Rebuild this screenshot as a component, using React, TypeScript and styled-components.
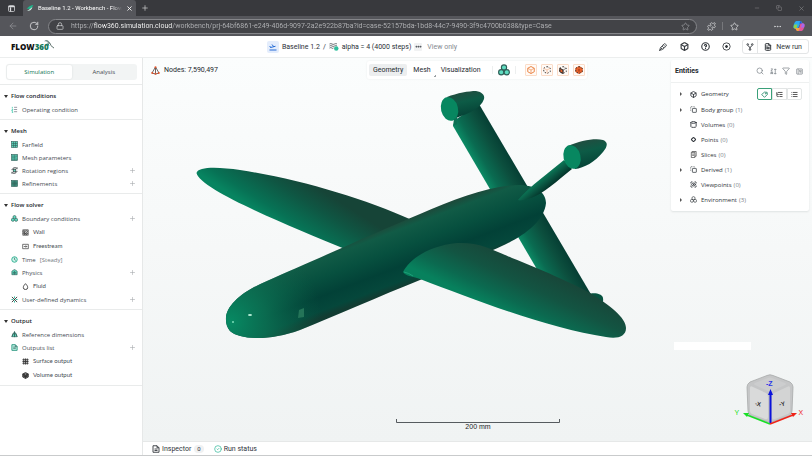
import React from "react";
import styled, { createGlobalStyle, css } from "styled-components";
import {
  ArrowLeft, RotateCw, Lock, Star, X, Plus, Minus, Copy, Ellipsis, Puzzle,
  Box as Cube, CircleQuestionMark, FileText, Search, Funnel,
  ListTree, List, Cylinder, Diamond, ScanEye, CircleCheck,
} from "lucide-react";

const GlobalStyle = createGlobalStyle`
  * { box-sizing: border-box; }
  body {
    margin: 0; background: #fff; font-family: Roboto, "Open Sans", sans-serif; font-size: 7px; line-height: 10px;
    color: #30353c;
  }
  button, input { font: inherit; color: inherit; border: 0; padding: 0; margin: 0; background: none; }
  ul { list-style: none; margin: 0; padding: 0; }
  h2, h3 { display: flex; margin: 0; font: inherit; }
  svg { display: block; flex: none; }
`;

const Page = styled.div`display: flex; flex-direction: column; min-height: 100vh; border-bottom: 1px solid #c9cbcc;`;

/* browser chrome */
const TabStrip = styled.div`display: flex; align-items: center; height: 16px; background: #38393d; color: #d4d5d7;`;
const TabMenu = styled.button`display: grid; place-items: center; width: 23px; height: 16px; color: #dadbdd;`;
const BrowserTab = styled.div`
  display: flex; align-items: center; gap: 4px; width: 113px; height: 16px; padding: 0 4px 0 3px;
  background: #55565b; border-radius: 3px 3px 0 0; color: #fff; font-size: 6px;
`;
const TabTitle = styled.span`
  flex: 1; overflow: hidden; white-space: nowrap;
  mask-image: linear-gradient(to right, #000 88%, transparent);
`;
const IconButton = styled.button<{ $w?: number }>`display: grid; place-items: center; width: ${(p) => p.$w ?? 12}px; height: 12px;`;
const WindowButtons = styled.div`display: flex; margin-left: auto; color: #88898c;`;
const AddressRow = styled.div`display: flex; align-items: center; height: 20px; background: #55565b; color: #d8d9db; padding-right: 7px;`;
const AddressBox = styled.label`
  display: flex; align-items: center; flex: 1; gap: 7px; height: 15px; margin-left: 6px; padding: 0 5px 0 7px;
  border: 1px solid #85868a; border-radius: 8px; background: #424347;
`;
const AddressInput = styled.input`
  flex: 1; min-width: 0; outline: 0; height: 11px; color: transparent;
  background: linear-gradient(to right, #b4b5b8 0 22px, #fff 22px 101px, #b4b5b8 101px);
  background-clip: text; -webkit-background-clip: text;
`;
const ChromeTools = styled.div`display: flex; align-items: center; gap: 5px; margin-left: 8px;`;
const ThinRule = styled.span`width: 1px; height: 8px; background: #77787c;`;
const Spacer = styled.span<{ $w: number }>`width: ${(p) => p.$w}px;`;

/* application header */
const Header = styled.header`
  display: grid; grid-template-columns: 8fr auto 11fr; align-items: center; height: 22px; padding: 0 3px 0 11px;
  border-bottom: 1px solid #eceeee; background: #fff;
`;
const Logo = styled.a`
  display: flex; justify-self: start; color: #111; text-decoration: none; font: 800 8px/12px "Open Sans", sans-serif;
  em { font-style: normal; color: #14795a; }
  svg { margin: -2px 0 0 -6px; }
`;
const Crumbs = styled.nav`display: flex; align-items: center; gap: 3px; white-space: nowrap;`;
const CrumbIcon = styled.span`display: grid; place-items: center; width: 12px; height: 12px; border-radius: 2px; background: #e4edfc; color: #246bd6;`;
const Crumb = styled.a`color: #2b3037; text-decoration: none;`;
const MoreButton = styled.button`display: grid; place-items: center; width: 8px; height: 8px; border-radius: 1px; background: #f1f2f3;`;
const ViewOnly = styled.span`margin-left: 2px; color: #858a91;`;
const HeaderTools = styled.div`display: flex; justify-self: end; align-items: center; gap: 9px; color: #33383d;`;
const RunGroup = styled.div`
  display: flex; height: 15px; margin-left: 1px; border: 1px solid #e3e5e6; border-radius: 3px;
`;
const RunButton = styled.button`
  display: flex; align-items: center; gap: 4px; padding: 0 6px; white-space: nowrap;
  &:first-child { padding: 0 3px; border-right: 1px solid #e3e5e6; }
`;

/* sidebar */
const Body = styled.div`display: flex; flex: 1;`;
const Sidebar = styled.aside`
  flex: none; width: 143px; padding-top: 6px; border-right: 1px solid #e6e8e8; background: #fff;
  font-family: "Open Sans", sans-serif; font-size: 6px;
`;
const Segmented = styled.div`display: flex; margin: 0 5px 4px 6px; height: 16px; padding: 1px; border-radius: 3px; background: #f2f4f4;`;
const Segment = styled.button<{ $active?: boolean }>`
  flex: 1; border-radius: 2px; color: #454b52;
  ${(p) => p.$active && css`background: #fff; color: #0c7452; box-shadow: 0 0 2px #d5d9d9;`}
`;
const Section = styled.section`padding: 4px 6px 3px 4px; border-top: 1px solid #e9ebeb; &:last-child { border-bottom: 1px solid #e9ebeb; }`;
const SectionTitle = styled.button`
  display: flex; align-items: center; gap: 3px; height: 14px; color: #23282e; font-weight: 600;
  &::before { content: ""; border: 2px solid transparent; border-top: 3px solid #333; border-bottom: 0; }
`;
const SideRow = styled.li<{ $nested?: boolean }>`
  display: flex; align-items: center; justify-content: space-between;
  height: ${(p) => (p.$nested ? 14 : 13)}px; padding-left: ${(p) => (p.$nested ? 18 : 7)}px;
  color: #454b52;
  ${(p) => p.$nested && css`font-family: Lato, sans-serif;`}
`;
const SideLink = styled.button`display: flex; align-items: center; gap: 4px; white-space: nowrap;`;
const Note = styled.span`color: #757b82;`;
const AddButton = styled.button`color: #a5a9ad;`;

/* viewport */
const Main = styled.main`display: flex; flex-direction: column; flex: 1; min-width: 0;`;
const Viewport = styled.div`
  position: relative; display: flex; flex: 1; min-height: 383px; overflow: hidden;
  background: linear-gradient(#fbfdfd, #f6f8f8 50%, #f0f3f3);
`;
const Scene = styled.svg`width: 100%; flex: 1;`;
const NodeCount = styled.div`position: absolute; top: 7px; left: 8px; display: flex; align-items: center; gap: 4px; color: #24292e;`;
const ViewBar = styled.div`
  position: absolute; top: 3px; left: 224px; display: flex; align-items: center; height: 18px; padding: 0 2px;
  background: #fff; border-radius: 2px; box-shadow: 0 0 2px #e9ecec;
`;
const ViewTab = styled.button<{ $active?: boolean }>`
  position: relative; height: 12px; padding: 0 4px; border-radius: 2px; color: #262b31; margin-right: 2px;
  background: ${(p) => (p.$active ? "#eceeef" : "transparent")};
`;
const Corner = styled.span`position: absolute; right: -1px; bottom: -1px; width: 2px; height: 2px; border: solid #9a9fa3; border-width: 0 1px 1px 0;`;
const BarRule = styled.span`width: 1px; height: 8px; margin: 0 5px; background: #edefef;`;
const ModeButtons = styled.div`display: flex; gap: 4px; margin-left: 4px;`;
const ModeButton = styled.button`display: grid; place-items: center; width: 12px; height: 12px; border: 1px solid #fbdcc8; border-radius: 1px; background: #fffaf6;`;
const BlankField = styled.div`position: absolute; right: 61px; bottom: 91px; width: 77px; height: 8px; background: #fff;`;
const CubeWidget = styled.div`position: absolute; right: 4px; bottom: 14px;`;

/* entities panel */
const Panel = styled.aside`
  position: absolute; top: 2px; right: 3px; width: 138px; padding-bottom: 4px; background: #fff;
  border-radius: 2px; box-shadow: 0 1px 2px #dfe3e3; font-family: "Open Sans", sans-serif; font-size: 6px;
`;
const PanelHead = styled.div`display: flex; align-items: center; height: 23px; padding: 0 6px 0 4px; border-bottom: 1px solid #eef0f0; margin-bottom: 3px;`;
const PanelTitle = styled.h2`flex: 1; font-weight: 700; font-family: Roboto, sans-serif; font-size: 7px; color: #24292e;`;
const PanelTools = styled.div`display: flex; gap: 5px; color: #737a80;`;
const EntityRow = styled.li<{ $first?: boolean }>`display: flex; align-items: center; height: ${(p) => (p.$first ? 16 : 15)}px; padding: 0 7px 0 9px;`;
const Caret = styled.span<{ $shown: boolean }>`
  width: 3px; border: 2px solid transparent; border-left: 2px solid #555; border-right: 0; margin-right: 7px;
  visibility: ${(p) => (p.$shown ? "visible" : "hidden")};
`;
const EntityButton = styled.button`
  display: flex; flex: 1; align-items: center; gap: 4px; color: #2f343a; white-space: nowrap;
  span { color: #7a8087; margin-left: -2px; }
`;
const Toggle = styled.div`display: flex; height: 12px;`;
const ToggleButton = styled.button<{ $active?: boolean }>`
  display: grid; place-items: center; width: 15px; border: 1px solid ${(p) => (p.$active ? "#3aa079" : "#e2e5e5")};
  color: ${(p) => (p.$active ? "#18815f" : "#444")};
  &:first-child { border-radius: 2px 0 0 2px; }
  &:last-child { border-radius: 0 2px 2px 0; }
`;
const StatusBar = styled.footer`display: flex; align-items: center; gap: 10px; height: 14px; padding-left: 9px; background: #fff; border-top: 1px solid #e6e8e8;`;
const StatusItem = styled.button`display: flex; align-items: center; gap: 2px;`;
const Count = styled.span`margin-left: 1px; padding: 0 3px; border-radius: 4px; background: #f0f1f2; font-size: 6px; line-height: 8px;`;

const TEAL = "#5fdcc0";
const INK = "#2f5f58";

type GlyphName =
  | "operating" | "farfield" | "meshparams" | "rotation" | "refine" | "boundary" | "wall" | "freestream"
  | "time" | "physics" | "fluid" | "dynamics" | "reference" | "outputs" | "surface" | "volume" | "environment"
  | "group" | "slices" | "pen" | "target" | "inspect" | "fork" | "sort" | "dock" | "tag" | "plane";

const glyphs: Record<GlyphName, React.ReactNode> = {
  operating: <><path d="M3 2v3M2 7h2v2H2v2h2M2 13h2v2H2" stroke="#49cdb0" strokeWidth="2" /><path d="M7 3h7M7 8h7M7 13h7" stroke="#667" /></>,
  farfield: <><rect x="1.5" y="1.5" width="13" height="13" fill={TEAL} /><path d="M1.5 6h13M1.5 10.5h13M6 1.5v13M10.5 1.5v13" /></>,
  meshparams: <><rect x="1.5" y="1.5" width="13" height="13" fill={TEAL} /><path d="M4.5 1.5v13M8 1.5v13M11.5 1.5v13M1.5 5h13M1.5 8.5h9M1.5 12h13" strokeWidth="1" /></>,
  rotation: <g stroke="#2b3135"><path d="M2 7C4 1 11 0 14 4V1M14 9C12 15 5 16 2 12v3" strokeWidth="2" /><rect x="5" y="5" width="6" height="6" fill={TEAL} /></g>,
  refine: <><rect x="1.5" y="1.5" width="13" height="13" fill="#47a995" /><path d="M1.5 5h13M1.5 8h13M1.5 11h13M5 1.5v13M8 1.5v13M11 1.5v13" strokeWidth="1.4" /></>,
  boundary: <g fill={TEAL}><circle cx="8" cy="4.7" r="3.5" /><circle cx="4.3" cy="11" r="3.5" /><circle cx="11.7" cy="11" r="3.5" /></g>,
  environment: <g stroke="#343a3f" fill="none"><circle cx="8" cy="5" r="3.6" /><circle cx="4.4" cy="11" r="3.4" /><circle cx="11.6" cy="11" r="3.4" /></g>,
  wall: <g stroke="#333"><rect x="2" y="2" width="12" height="12" fill="#ccc" /><path d="M2 6l4-4M2 11l9-9M4 14l10-10M9 14l5-5" /><path d="M5 5v6h6" strokeWidth="2" /></g>,
  freestream: <g stroke="#333"><path d="M1.5 3h13v10h-13zM4 8h7M8.5 5.5L11 8l-2.5 2.5" /></g>,
  time: <><circle cx="8" cy="8" r="6.3" fill="#c8f5e9" stroke="#28a98b" strokeWidth="2" /><path d="M8 4v4l3 2" /></>,
  physics: <><path d="M8 1l6 4v8H2V5z" fill={TEAL} /><path d="M8 4v9M5 7l3 2 3-2M5 12V7M11 12V7" /></>,
  fluid: <path d="M8 1.5C5 5 3 7 3 10a5 5 0 0010 0c0-3-2-5-5-8.5z" stroke="#333" strokeWidth="2" />,
  dynamics: <><path d="M2 2l12 12M14 2L2 14" stroke="#333" strokeWidth="2" /><path d="M1 8h4M11 8h4M8 1v4M8 11v4" stroke="#2fb99b" strokeWidth="2.2" /></>,
  reference: <><path d="M8 1l6 12H2z" fill={TEAL} /><path d="M8 2v12M2 13l3-8M14 13l-3-8" strokeWidth="2" /></>,
  outputs: <><path d="M2 1.5h8l4 4v9H2z" fill="#baf3e5" stroke="#26937b" strokeWidth="2" /><path d="M5 7h6M5 10h6M10 2v4h4" /></>,
  surface: <g stroke="#333" strokeWidth="2"><path d="M1 4h14M1 8h14M1 12h14M4 1v14M8 1v14M12 1v14" /></g>,
  volume: <g stroke="#222"><path d="M8 1l6.5 3.5v7L8 15l-6.5-3.5v-7z" fill="#777" /><path d="M1.5 4.5L8 8l6.5-3.5M8 8v7M5 3v9M11 3v9M2 8l6 3 6-3" /></g>,
  group: <g stroke="#3c4247"><path d="M10 3V1.5H1.5V10H3" strokeDasharray="2 1.5" /><rect x="5.5" y="5.5" width="9" height="9" rx="1" strokeWidth="1.8" /></g>,
  slices: <g stroke="#333"><path d="M3 3h8v12H3zM5 3V1h9v11h-3M5 7h4M5 10h4" /></g>,
  pen: <g stroke="#33383d" strokeWidth="1.6"><path d="M1 15l2-6 7.5-7.5h2L14.5 4v2L7 13z" /><path d="M3.5 8.5l4 4M6 6l4 4M8.5 3.5l4 4M1 15l5-5" /></g>,
  target: <g stroke="#33383d"><circle cx="8" cy="8" r="6.5" /><path d="M8 5.5v5M5.5 8h5" strokeWidth="2.4" /></g>,
  inspect: <g stroke="#33383d"><path d="M2 1.5h8l4 4v9H2zM10 1.5v4h4" strokeWidth="1.8" /><path d="M5 8h6M5 11h6" strokeWidth="1.8" /></g>,
  fork: <g stroke="#33383d" strokeWidth="1.8"><circle cx="3.5" cy="3" r="1.6" /><circle cx="12.5" cy="3" r="1.6" /><circle cx="8" cy="13" r="1.6" /><path d="M3.5 5l4.5 4 4.5-4M8 8v4" /></g>,
  sort: <g stroke="#6d747a"><path d="M2 2h4L2 7h4M2 14v-4h4v4M2 12h4M12 2v12M9.5 4.5L12 2l2.5 2.5M9.5 11.5L12 14l2.5-2.5" /></g>,
  dock: <g stroke="#7a8187"><rect x="1.5" y="2" width="13" height="12" rx="1" /><path d="M5 2v12M8 5h4v3H8zM8 11h5" /></g>,
  tag: <g stroke="#18815f" strokeWidth="1.8"><path d="M8 2.5l6 .5.5 5L8 14.5 1.5 8z" /><circle cx="11" cy="6" r="1" /></g>,
  plane: <g stroke="#246bd6" strokeWidth="2"><path d="M1 14h14M3 9l10-2.5M1.5 6l2 3.5M6 3l3.5 4.5" /></g>,
};

const Glyph = ({ name, size = 7 }: { name: GlyphName; size?: number }) => (
  <svg width={size} height={size} viewBox="0 0 16 16" fill="none" stroke={INK} strokeWidth="1.5" aria-hidden="true">{glyphs[name]}</svg>
);

type Item = { label: string; icon: GlyphName; nested?: boolean; add?: boolean; note?: string };
const sections: { title: string; items: Item[] }[] = [
  { title: "Flow conditions", items: [{ label: "Operating condition", icon: "operating" }] },
  { title: "Mesh", items: [
    { label: "Farfield", icon: "farfield" },
    { label: "Mesh parameters", icon: "meshparams" },
    { label: "Rotation regions", icon: "rotation", add: true },
    { label: "Refinements", icon: "refine", add: true },
  ] },
  { title: "Flow solver", items: [
    { label: "Boundary conditions", icon: "boundary", add: true },
    { label: "Wall", icon: "wall", nested: true },
    { label: "Freestream", icon: "freestream", nested: true },
    { label: "Time", icon: "time", note: "[Steady]" },
    { label: "Physics", icon: "physics", add: true },
    { label: "Fluid", icon: "fluid", nested: true },
    { label: "User-defined dynamics", icon: "dynamics", add: true },
  ] },
  { title: "Output", items: [
    { label: "Reference dimensions", icon: "reference" },
    { label: "Outputs list", icon: "outputs", add: true },
    { label: "Surface output", icon: "surface", nested: true },
    { label: "Volume output", icon: "volume", nested: true },
  ] },
];

const entities: { label: string; count?: number; open?: boolean; icon: React.ReactNode }[] = [
  { label: "Geometry", open: true, icon: <Cube size={7} strokeWidth={3} /> },
  { label: "Body group", count: 1, open: true, icon: <Glyph name="group" /> },
  { label: "Volumes", count: 0, icon: <Cylinder size={7} strokeWidth={3} /> },
  { label: "Points", count: 0, icon: <Diamond size={7} viewBox="-5 -5 34 34" strokeWidth={5} /> },
  { label: "Slices", count: 0, icon: <Glyph name="slices" /> },
  { label: "Derived", count: 1, open: true, icon: <Glyph name="group" /> },
  { label: "Viewpoints", count: 0, icon: <ScanEye size={7} strokeWidth={3} /> },
  { label: "Environment", count: 3, open: true, icon: <Glyph name="environment" /> },
];

const Swoosh = () => (
  <svg width="12" height="12" viewBox="0 0 24 24" aria-hidden="true">
    <path d="M2 5C6 0 12 2 14 9l-3 1C9 5 6 4 2 5z" fill="#78938c" />
    <path d="M7 9c4-1 5 2 6 5-3-1-4-3-6-5z" fill="#167257" />
    <path d="M13 7c2 4 4 9 9 11" stroke="#596d68" strokeWidth="2" fill="none" />
  </svg>
);

const Favicon = () => (
  <svg width="8" height="8" viewBox="0 0 16 16" aria-hidden="true">
    <path d="M1 9C5 8 5 3 15 2c-3 3-2 7-8 8z" fill="#21b48b" /><path d="M2 14c5 0 9-2 11-8-4 3-6 5-11 8z" fill="#d7f5eb" />
  </svg>
);

const Copilot = () => (
  <svg width="12" height="12" viewBox="0 0 24 24" aria-hidden="true">
    <path d="M8 2h7c3 0 3 5 5 6h-6L10 17H4c-5 0-3-7-1-11 1-3 3-4 5-4z" fill="#2ba8f0" />
    <path d="M3 9h6l-2 8H4c-4 0-3-5-1-8z" fill="#8cd34b" />
    <path d="M14 2c3 0 3 5 5 6h-6z" fill="#2457d6" />
    <path d="M16 22H9c-3 0-3-5-5-6h8l3-9h5c5 0 3 7 1 11-1 3-3 4-5 4z" fill="#e3559a" />
    <path d="M4 16h10l-3 6H9c-3 0-3-5-5-6z" fill="#f4a63a" />
    <path d="M18 7h2c4 0 3 5 2 8h-6z" fill="#a667ed" />
  </svg>
);

const ModeIcon = ({ mode }: { mode: number }) => (
  <svg width="8" height="8" viewBox="0 0 16 16" fill="none" stroke={mode === 0 ? "#e97b37" : "#33302f"} strokeWidth="1.8" aria-hidden="true">
    {mode === 2 && <path d="M1.5 4.5L8 8v7l-6.5-3.5z" fill="#e9622b" />}
    {mode === 3 && <path d="M8 1l6.5 3.5v7L8 15l-6.5-3.5v-7z" fill="#e9622b" stroke="#e9622b" />}
    <path d="M8 1l6.5 3.5v7L8 15l-6.5-3.5v-7z" strokeDasharray={mode === 0 ? undefined : "3 3"} />
    {mode === 3
      ? <path d="M8 6v5" stroke="#8c2a10" />
      : <path d="M1.5 4.5L8 8l6.5-3.5M8 8v7" stroke={mode === 1 ? "#f2a577" : undefined} strokeWidth="1.2" />}
  </svg>
);

const NodesIcon = () => (
  <svg width="9" height="9" viewBox="0 0 18 18" aria-hidden="true">
    <path d="M9 2l7 12-7 2-7-2z" fill="#fff" stroke="#3a302d" strokeWidth="1.5" /><path d="M9 2v14" stroke="#3a302d" strokeWidth="1.5" />
    <g fill="#e6552b"><circle cx="9" cy="2.5" r="2" /><circle cx="2.5" cy="14" r="2" /><circle cx="15.5" cy="14" r="2" /><circle cx="9" cy="15.5" r="2" /></g>
  </svg>
);

const CaseIcon = () => (
  <svg width="10" height="9" viewBox="0 0 20 18" fill="none" stroke="#3b4147" strokeWidth="1.5" aria-hidden="true">
    <path d="M1 4c4-3 6 3 10 0 2-1 4-1 5 0M1 8c4-3 6 3 10 0 2-1 4-1 5 0M1 12c4-3 6 3 8 0" /><circle cx="14.5" cy="13" r="4.5" fill="#2fbf9d" stroke="none" />
  </svg>
);

const Aircraft = () => (
  <Scene viewBox="143 58 669 383" role="img" aria-label="Aircraft geometry">
    <defs>
      <linearGradient id="farWing" gradientUnits="userSpaceOnUse" x1="312" y1="184" x2="284" y2="228">
        <stop offset="0" stopColor="#164437" /><stop offset=".35" stopColor="#0f5643" /><stop offset=".8" stopColor="#077255" /><stop offset="1" stopColor="#078460" />
      </linearGradient>
      <linearGradient id="hull" gradientUnits="userSpaceOnUse" x1="372" y1="232" x2="394" y2="290">
        <stop offset="0" stopColor="#1d4a3b" /><stop offset=".12" stopColor="#115b46" /><stop offset=".4" stopColor="#07503f" /><stop offset=".68" stopColor="#024137" /><stop offset=".9" stopColor="#05473b" /><stop offset="1" stopColor="#123c32" />
      </linearGradient>
      <radialGradient id="nose" gradientUnits="userSpaceOnUse" cx="230" cy="322" r="92">
        <stop offset="0" stopColor="#078a63" /><stop offset=".4" stopColor="#0b7153" stopOpacity=".85" /><stop offset="1" stopColor="#0b6048" stopOpacity="0" />
      </radialGradient>
      <linearGradient id="nearWing" gradientUnits="userSpaceOnUse" x1="532" y1="264" x2="508" y2="314">
        <stop offset="0" stopColor="#184639" /><stop offset=".4" stopColor="#135442" /><stop offset=".75" stopColor="#0b6a50" /><stop offset="1" stopColor="#07815d" />
      </linearGradient>
      <linearGradient id="stabilizer" gradientUnits="userSpaceOnUse" x1="471" y1="157" x2="502" y2="139">
        <stop offset="0" stopColor="#0b8b65" /><stop offset=".25" stopColor="#0a6b51" /><stop offset=".65" stopColor="#0c4f3e" /><stop offset="1" stopColor="#053c32" />
      </linearGradient>
      <linearGradient id="pod" gradientUnits="objectBoundingBox" x1=".3" y1="0" x2=".6" y2="1">
        <stop offset="0" stopColor="#254b3f" /><stop offset=".4" stopColor="#0d5b46" /><stop offset="1" stopColor="#043e33" />
      </linearGradient>
      <linearGradient id="fin" gradientUnits="userSpaceOnUse" x1="542" y1="178" x2="550" y2="188">
        <stop offset="0" stopColor="#0b7656" /><stop offset=".4" stopColor="#0a5944" /><stop offset="1" stopColor="#032f27" />
      </linearGradient>
    </defs>
    <path d="M196.5 173C198 166 220 167 240 170C300 179 362 198 412 220L345 249C290 226 200 190 196.5 173Z" fill="url(#farWing)" />
    <path d="M587 295C592 292 602 293 603 298Q604 303 600 305L585 303Z" fill="#075340" />
    <path d="M453 126L455 120L479 104L592 296L555 300Z" fill="url(#stabilizer)" />
    <path d="M447 97C457 93 469 91 476 91C482 92 485 95 484 99C481 108 470 113 456 118Z" fill="url(#pod)" />
    <ellipse cx="449.5" cy="109" rx="8.5" ry="12" transform="rotate(-14 449.5 109)" fill="#078760" />
    <path d="M454 119l3-2v7l-4 2z" fill="#0b7154" />
    <path d="M226 320C225 305 245 290 267 281C310 262 375 233 420 214C455 199 490 185 520 185C540 186 546 195 546 203C544 225 515 241 493 250L420 280C380 296 335 316 300 330C270 341 240 340 230 331C227 327 226 324 226 320Z" fill="url(#hull)" />
    <path d="M226 320C225 305 245 290 267 281C310 262 340 248 370 236L340 314L300 330C270 341 240 340 230 331C227 327 226 324 226 320Z" fill="url(#nose)" />
    <path d="M518 200C530 186 550 172 564 160L572 169C557 181 543 194 531 198C524 200 520 201 518 200Z" fill="url(#fin)" />
    <path d="M568 146C580 141 594 138 603 140C608 142 608 146 603 152C595 162 584 168 575 169Z" fill="url(#pod)" />
    <ellipse cx="572" cy="157" rx="8.5" ry="12" transform="rotate(-14 572 157)" fill="#078760" />
    <path d="M403 272C410 259 428 246 457 243C480 242 493 250 512 258C540 269 572 283 590 293C610 305 626 318 626 328C626 337 617 339 606 337C550 329 475 300 420 279C412 276 405 276 403 272Z" fill="url(#nearWing)" />
    <path d="M404 272q5 1 9 4" fill="none" stroke="#1ca078" />
    <path d="M299 310l5-2v9l-6 1z" fill="#247458" />
    <ellipse cx="250" cy="315" rx="2" ry="1" fill="#b8efd8" /><circle cx="233" cy="322" r="1" fill="#7cdcb8" />
    <path d="M396.5 419v3.5H559.5V419" stroke="#565b5f" fill="none" />
    <text x="478" y="429" textAnchor="middle" fill="#202428" fontSize="7" fontFamily="Liberation Sans, sans-serif">200 mm</text>
  </Scene>
);

const ViewCube = () => (
  <CubeWidget>
    <svg width="74" height="54" viewBox="734 373 74 54" role="img" aria-label="View orientation" fontFamily="Liberation Sans, sans-serif">
      <path d="M767 375.5Q770 374 773 375.5L790 382Q793 384 793 387L792 411Q792 414 789 416L772 422Q770 423 768 422L751 416Q748 414 748 411L747 387Q747 384 750 382Z" fill="#c5c6c7" stroke="#a7a9aa" strokeWidth=".8" />
      <path d="M750 388Q750 385 753 387L766 393Q768 394 768 397V417Q768 420 765 419L752 414Q750 413 750 411Z" fill="#d9dada" />
      <path d="M790 388Q790 385 787 387L774 393Q772 394 772 397V417Q772 420 775 419L788 414Q790 413 790 411Z" fill="#d3d4d4" />
      <path d="M768 378Q770 377 772 378L785 383Q787 384 785 385L772 391Q770 392 768 391L755 385Q753 384 755 383Z" fill="#cccdce" />
      <path d="M770.5 423V393" stroke="#0b12dc" strokeWidth="2" /><path d="M770.5 389l2.5 6h-5z" fill="#0b12dc" />
      <path d="M770 424L747 415" stroke="#18df26" strokeWidth="1.5" /><path d="M743 413l6 0-2 4z" fill="#18df26" />
      <path d="M770 424L793 415" stroke="#ee2318" strokeWidth="1.5" /><path d="M797 413l-6 0 2 4z" fill="#ee2318" />
      <text x="734.5" y="414.5" fontSize="7" fill="#18df26">Y</text><text x="798.5" y="414.5" fontSize="7" fill="#ee2318">X</text>
      <text x="766" y="386" fontSize="7" fontWeight="700" fill="#2a32e8">-Z</text>
      <text x="755" y="406" fontSize="6" fontWeight="700" fill="#333" transform="rotate(12 758 404)">-X</text>
      <text x="779" y="406" fontSize="6" fontWeight="700" fill="#333" transform="rotate(-12 782 404)">-Y</text>
    </svg>
  </CubeWidget>
);

export default function App() {
  return (
    <Page>
      <GlobalStyle />
      <TabStrip>
        <TabMenu aria-label="Tab actions"><svg width="7" height="7" viewBox="0 0 14 14" fill="none" stroke="currentColor" strokeWidth="1.5"><rect x="1" y="1" width="12" height="12" rx="2" /><path d="M1 3h12M5 5v8" strokeWidth="2.5" /></svg></TabMenu>
        <BrowserTab><Favicon /><TabTitle>Baseline 1.2 - Workbench - Flow360</TabTitle><IconButton $w={6} aria-label="Close tab"><X size={7} strokeWidth={3} /></IconButton></BrowserTab>
        <IconButton $w={18} aria-label="New tab"><Plus size={8} /></IconButton>
        <WindowButtons>
          <IconButton $w={22} aria-label="Minimize"><Minus size={6} /></IconButton>
          <IconButton $w={22} aria-label="Restore"><Copy size={6} /></IconButton>
          <IconButton $w={22} aria-label="Close"><X size={7} /></IconButton>
        </WindowButtons>
      </TabStrip>
      <AddressRow>
        <IconButton $w={26} aria-label="Back"><ArrowLeft size={10} color="#8b8c90" /></IconButton>
        <IconButton $w={16} aria-label="Reload"><RotateCw size={10} /></IconButton>
        <AddressBox>
          <Lock size={8} />
          <AddressInput aria-label="Address" defaultValue="https://flow360.simulation.cloud/workbench/prj-64bf6861-e249-406d-9097-2a2e922b87ba?id=case-52157bda-1bd8-44c7-9490-3f9c4700b038&type=Case" />
          <IconButton aria-label="Add to favorites"><Star size={9} color="#929397" /></IconButton>
        </AddressBox>
        <ChromeTools>
          <IconButton aria-label="Extensions"><Puzzle size={9} /></IconButton>
          <ThinRule />
          <IconButton aria-label="Favorites"><Star size={9} /></IconButton>
          <Spacer $w={21} />
          <IconButton aria-label="Browser menu"><Ellipsis size={9} /></IconButton>
          <Spacer $w={0} />
          <IconButton aria-label="Copilot"><Copilot /></IconButton>
        </ChromeTools>
      </AddressRow>

      <Header>
        <Logo href="#home">FLOW<em>360</em><Swoosh /></Logo>
        <Crumbs aria-label="Breadcrumb">
          <CrumbIcon><Glyph name="plane" size={8} /></CrumbIcon>
          <Crumb href="#project">Baseline 1.2</Crumb>
          <span>/</span>
          <CaseIcon />
          <Crumb href="#case">alpha = 4 (4000 steps)</Crumb>
          <MoreButton aria-label="More"><Ellipsis size={7} strokeWidth={4} /></MoreButton>
          <ViewOnly>View only</ViewOnly>
        </Crumbs>
        <HeaderTools>
          <IconButton aria-label="Measure"><Glyph name="pen" size={8} /></IconButton>
          <IconButton aria-label="Model"><Cube size={9} strokeWidth={3} /></IconButton>
          <IconButton aria-label="Help"><CircleQuestionMark size={9} strokeWidth={3} /></IconButton>
          <IconButton aria-label="Add"><Glyph name="target" size={9} /></IconButton>
          <RunGroup>
            <RunButton aria-label="Fork"><Glyph name="fork" size={8} /></RunButton>
            <RunButton><FileText size={8} strokeWidth={3} />New run</RunButton>
          </RunGroup>
        </HeaderTools>
      </Header>

      <Body>
        <Sidebar>
          <Segmented><Segment $active>Simulation</Segment><Segment>Analysis</Segment></Segmented>
          {sections.map((s) => (
            <Section key={s.title}>
              <h3><SectionTitle>{s.title}</SectionTitle></h3>
              <ul>
                {s.items.map((i) => (
                  <SideRow key={i.label} $nested={i.nested}>
                    <SideLink><Glyph name={i.icon} />{i.label}{i.note && <Note>{i.note}</Note>}</SideLink>
                    {i.add && <AddButton aria-label={"Add to " + i.label}><Plus size={7} /></AddButton>}
                  </SideRow>
                ))}
              </ul>
            </Section>
          ))}
        </Sidebar>
        <Main>
          <Viewport>
            <Aircraft />
            <NodeCount><NodesIcon />Nodes: 7,590,497</NodeCount>
            <ViewBar>
              <ViewTab $active>Geometry</ViewTab><ViewTab>Mesh<Corner /></ViewTab><ViewTab>Visualization</ViewTab>
              <BarRule />
              <IconButton aria-label="Boundaries"><Glyph name="boundary" size={12} /></IconButton>
              <BarRule />
              <ModeButtons>
                {["Solid", "Points", "Shaded edges", "Filled"].map((m, k) => <ModeButton key={m} aria-label={m}><ModeIcon mode={k} /></ModeButton>)}
              </ModeButtons>
            </ViewBar>
            <Panel>
              <PanelHead>
                <PanelTitle>Entities</PanelTitle>
                <PanelTools>
                  <IconButton $w={8} aria-label="Search"><Search size={8} /></IconButton>
                  <IconButton $w={8} aria-label="Sort"><Glyph name="sort" /></IconButton>
                  <IconButton $w={8} aria-label="Filter"><Funnel size={8} /></IconButton>
                  <IconButton $w={8} aria-label="Dock"><Glyph name="dock" /></IconButton>
                </PanelTools>
              </PanelHead>
              <ul>
                {entities.map((e, k) => (
                  <EntityRow key={e.label} $first={k === 0}>
                    <Caret $shown={!!e.open} />
                    <EntityButton>{e.icon}{e.label}{e.count !== undefined && <span>({e.count})</span>}</EntityButton>
                    {k === 0 && (
                      <Toggle>
                        <ToggleButton $active aria-label="By tag"><Glyph name="tag" /></ToggleButton>
                        <ToggleButton aria-label="As tree"><ListTree size={7} strokeWidth={3} /></ToggleButton>
                        <ToggleButton aria-label="As list"><List size={7} strokeWidth={3} /></ToggleButton>
                      </Toggle>
                    )}
                  </EntityRow>
                ))}
              </ul>
            </Panel>
            <BlankField />
            <ViewCube />
          </Viewport>
          <StatusBar>
            <StatusItem><Glyph name="inspect" size={8} />Inspector<Count>0</Count></StatusItem>
            <StatusItem><CircleCheck size={8} color="#25b394" />Run status</StatusItem>
          </StatusBar>
        </Main>
      </Body>
    </Page>
  );
}
